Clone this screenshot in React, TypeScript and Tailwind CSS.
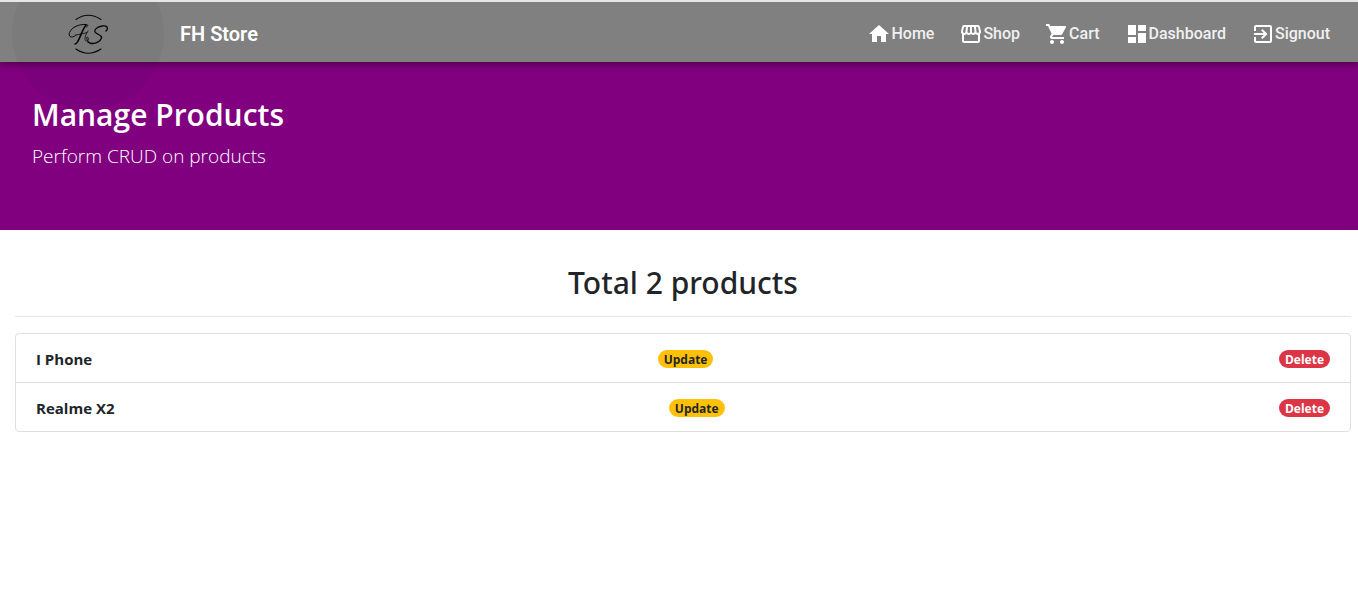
import { MdDashboard, MdExitToApp, MdHome, MdOutlineStorefront, MdShoppingCart } from "react-icons/md";
import type { IconType } from "react-icons";

const links: { label: string; icon: IconType }[] = [
  { label: "Home", icon: MdHome },
  { label: "Shop", icon: MdOutlineStorefront },
  { label: "Cart", icon: MdShoppingCart },
  { label: "Dashboard", icon: MdDashboard },
  { label: "Signout", icon: MdExitToApp },
];

const products = ["I Phone", "Realme X2"];

function Logo() {
  return (
    <svg viewBox="0 0 40 40" className="size-10" fill="none" stroke="#080808" strokeLinecap="round" aria-hidden="true">
      <path d="M8 5.5Q20 -3 33 5.5M8 35Q20 43.5 33 35" strokeWidth="1.1" />
      <path d="M8 21C4 25 0 23 1.5 18.5C4 13 11 10 18 10.5C20 10.6 20.5 12 18.5 13" strokeWidth="1" />
      <path d="M18 11C15 14 13 22 10 27C9 29 8 30 7 30" strokeWidth="1.6" />
      <path d="M8 21C12 20 15 20 19 18.5" strokeWidth="0.8" />
      <path d="M20 17C17 21 16 26 18 27C21 28 21 23 19 23C18 23 19 28 23 30" strokeWidth="0.8" />
      <path d="M38 17C41 14 39 11 34 12C28 13 25 17 28 19C31 21 35 22 33 25C31 29 24 31 20 28" strokeWidth="1.3" />
    </svg>
  );
}

function Header() {
  return (
    <header className="relative z-10 flex h-[60px] items-center justify-between bg-[#808080] pt-1 pr-7 font-[Roboto,sans-serif] font-medium text-white shadow-[0_2px_4px_-1px_rgba(0,0,0,0.2),0_4px_5px_rgba(0,0,0,0.14),0_1px_10px_rgba(0,0,0,0.12)]">
      <div className="flex items-center gap-4 pl-3">
        <button type="button" aria-label="FH Store home" className="relative flex w-[152px] items-center justify-center py-2">
          <span className="pointer-events-none absolute top-1/2 left-0 size-[152px] -translate-y-1/2 rounded-full bg-black/4" />
          <Logo />
        </button>
        <span className="text-xl font-semibold">FH Store</span>
      </div>
      <nav className="flex items-center gap-[25px]">
        {links.map(({ label, icon: Icon }) => (
          <a key={label} href={`#${label.toLowerCase()}`} className="flex items-center text-base text-[#f0f0f0]">
            <Icon className="size-6 text-white" />
            {label}
          </a>
        ))}
      </nav>
    </header>
  );
}

export default function App() {
  return (
    <div className="bg-white font-['Open_Sans','Noto_Sans',sans-serif] text-[#212529]">
      <div className="relative z-20 h-0.5 bg-[#e4e6e8]" />
      <Header />
      <section className="bg-[#800080] px-8 pt-8 pb-14 text-white">
        <h1 className="text-[30px] leading-[41px] font-semibold">Manage Products</h1>
        <p className="pt-1 pb-px text-[19px] leading-[34px] font-light">Perform CRUD on products</p>
      </section>
      <main className="pt-8 pr-[7px] pl-[15px]">
        <h2 className="border-b border-[#e5e5e5] pb-[13px] text-center font-['Noto_Sans',sans-serif] text-[30px] leading-[41px] font-medium">
          Total 2 products
        </h2>
        <ul className="mt-4 divide-y divide-[#dfdfdf] rounded border border-[#dfdfdf]">
          {products.map((name) => (
            <li key={name} className="flex items-center justify-between px-5 pt-[13px] pb-[11px]">
              <strong className="text-[15px] leading-6 font-bold">{name}</strong>
              <a href="#update" className="rounded-full bg-[#ffc107] px-1.5 pt-px text-xs leading-[17px] font-bold">
                Update
              </a>
              <button type="button" className="rounded-full bg-[#dc3545] px-1.5 pt-px text-xs leading-[17px] font-bold text-white">
                Delete
              </button>
            </li>
          ))}
        </ul>
      </main>
    </div>
  );
}
